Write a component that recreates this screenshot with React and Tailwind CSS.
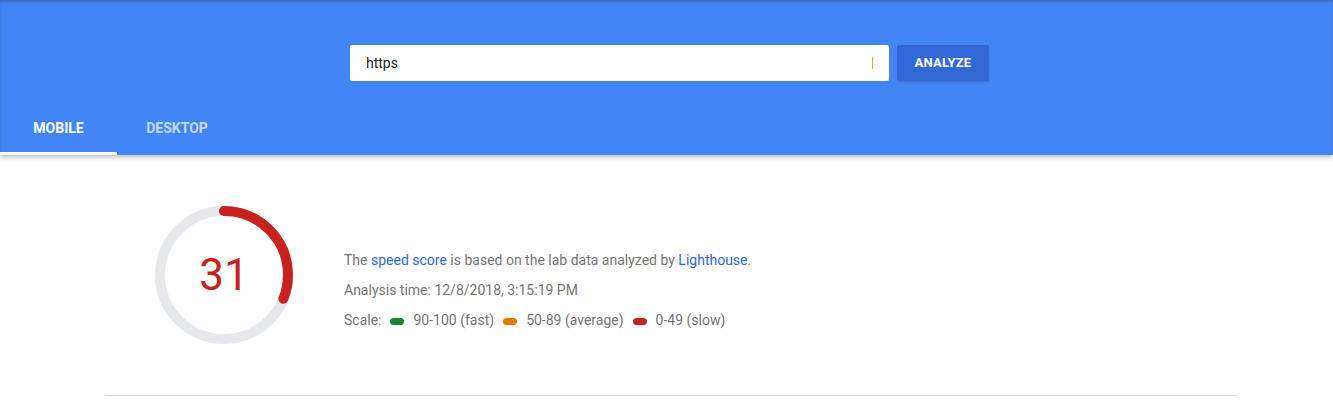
import React from 'react';

const R = 64;
const C = 2 * Math.PI * R;

function Gauge({ score }) {
  const len = (score / 100) * C;
  return (
    <div className="relative w-[140px] h-[140px] shrink-0">
      <svg width="140" height="140" viewBox="0 0 140 140" className="absolute inset-0">
        <circle cx="70" cy="70" r={R} fill="none" stroke="#e7e8eb" strokeWidth="10" />
        <circle
          cx="70"
          cy="70"
          r={R}
          fill="none"
          stroke="#c7221f"
          strokeWidth="10"
          strokeLinecap="round"
          strokeDasharray={`${len} ${C}`}
          transform="rotate(-90 70 70)"
        />
      </svg>
      <div className="absolute inset-0 flex items-center justify-center text-[44px] text-[#c7221f] leading-none">
        {score}
      </div>
    </div>
  );
}

function Pill({ color }) {
  return <span className={`inline-block w-[14px] h-[7px] rounded-full ${color}`} />;
}

export default function App() {
  return (
    <div className="w-[1333px] h-[407px] bg-white overflow-hidden" style={{ fontFamily: 'Roboto, "Liberation Sans", sans-serif' }}>
      <header className="relative z-10 h-[155px] bg-[#4285f4] shadow-[0_2px_5px_rgba(0,0,0,0.28),inset_0_3px_3px_-1px_rgba(0,0,0,0.18)]">
        <div className="flex justify-center pt-[45px] pl-[6px]">
          <div className="w-[539px] h-[36px] bg-white rounded-[2px] flex items-center pl-[16px] pr-[16px]">
            <span className="text-[14px] text-[#212121]">https</span>
            <span className="ml-auto w-px h-[12px] bg-[#f4a030]" />
          </div>
          <button className="ml-[8px] w-[92px] h-[36px] rounded-[2px] bg-[#3367d6] text-white text-[13px] font-bold tracking-[0.2px] shadow-[0_1px_2px_rgba(0,0,0,0.15)]">
            ANALYZE
          </button>
        </div>
        <div className="flex mt-[19px] h-[55px]">
          <div className="w-[117px] flex flex-col items-center">
            <span className="flex-1 flex items-center pt-[4px] text-[14px] font-bold text-white">MOBILE</span>
            <span className="w-full h-[3px] bg-white" />
          </div>
          <div className="w-[120px] flex flex-col items-center">
            <span className="flex-1 flex items-center pt-[4px] text-[14px] font-bold text-white/70">DESKTOP</span>
            <span className="w-full h-[3px]" />
          </div>
        </div>
      </header>

      <main className="ml-[105px] w-[1132px]">
        <div className="flex items-start pt-[50px] pb-[50px] pl-[49px]">
          <Gauge score={31} />
          <div className="ml-[50px] pt-[40px] text-[14px] text-[#757575] leading-[30px]">
            <p>
              The <span className="text-[#3367d6]">speed score</span> is based on the lab data analyzed by{' '}
              <span className="text-[#3367d6]">Lighthouse</span>.
            </p>
            <p>Analysis time: 12/8/2018, 3:15:19 PM</p>
            <p className="flex items-center">
              <span>Scale:</span>
              <span className="ml-[9px] mr-[9px]"><Pill color="bg-[#178239]" /></span>
              <span>90-100 (fast)</span>
              <span className="ml-[9px] mr-[9px]"><Pill color="bg-[#e67700]" /></span>
              <span>50-89 (average)</span>
              <span className="ml-[9px] mr-[9px]"><Pill color="bg-[#c7221f]" /></span>
              <span>0-49 (slow)</span>
            </p>
          </div>
        </div>
        <div className="h-px bg-[#dcdcdc]" />
      </main>
    </div>
  );
}
